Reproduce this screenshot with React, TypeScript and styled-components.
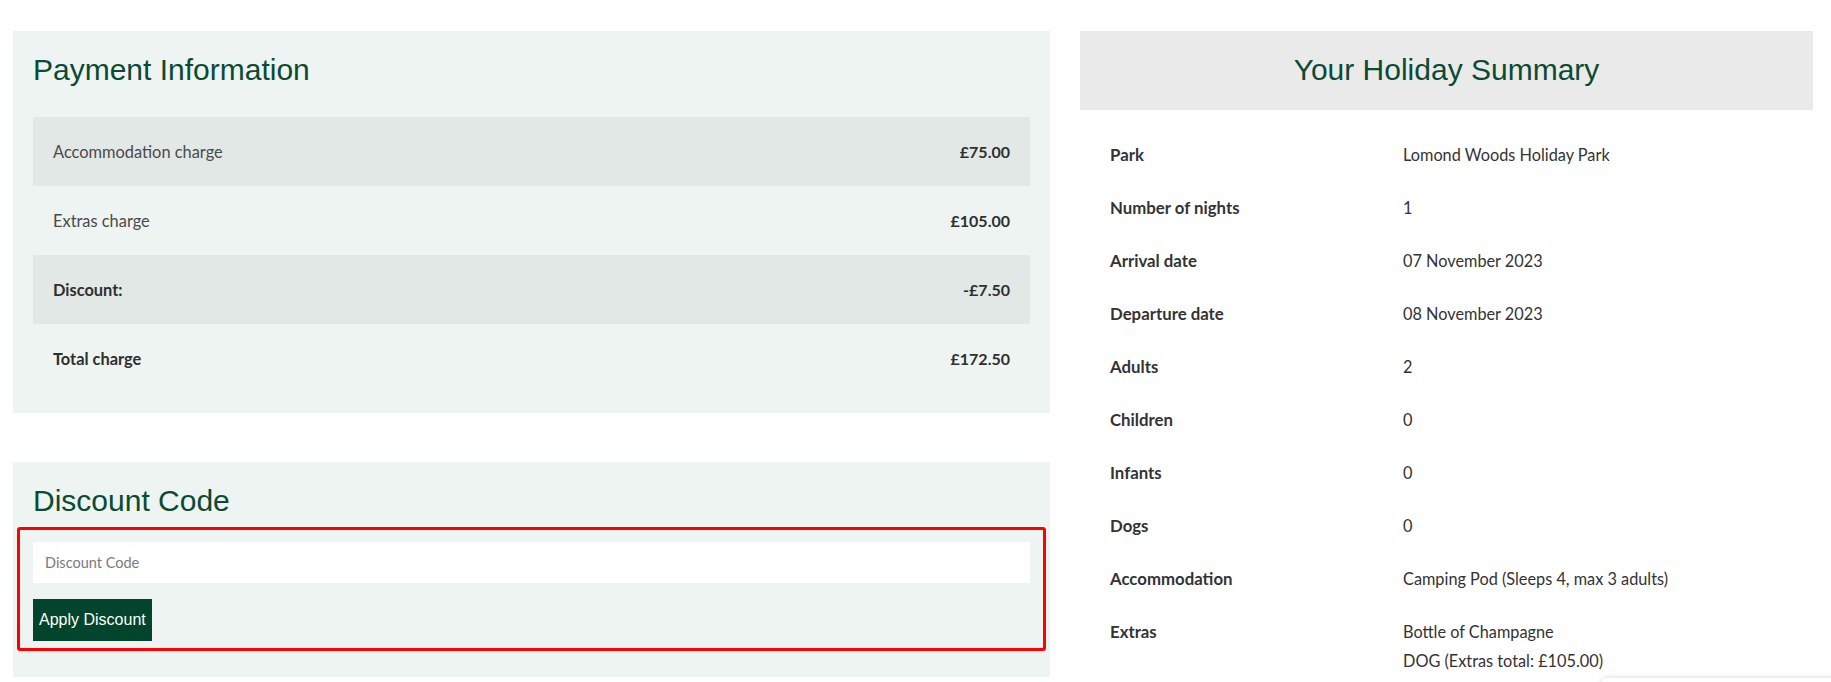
import React from "react";
import styled, { createGlobalStyle } from "styled-components";

const GlobalStyle = createGlobalStyle`
  html, body {
    margin: 0;
    padding: 0;
    background: #ffffff;
  }
  body {
    font-family: Lato, "Open Sans", sans-serif;
    color: #333333;
  }
  * {
    box-sizing: border-box;
  }
`;

// two columns: payment on the left, holiday summary on the right
const Page = styled.div`
  display: grid;
  grid-template-columns: 1037px 733px;
  column-gap: 30px;
  align-items: start;
  padding: 31px 18px 0 13px;
`;

const LeftColumn = styled.div`
  display: flex;
  flex-direction: column;
  gap: 49px;
`;

const Panel = styled.section<{ $bottom?: number }>`
  background-color: #eef4f2;
  padding: 20px 20px ${(p) => p.$bottom ?? 20}px;
`;

const PanelTitle = styled.h2<{ $gap?: number }>`
  margin: 0 0 ${(p) => p.$gap ?? 0}px;
  padding-top: 1px;
  height: 36px;
  font-family: "Liberation Sans", Arial, sans-serif;
  font-size: 30px;
  font-weight: 400;
  line-height: 36px;
  color: #0b4a33;
`;

const ChargeRow = styled.div<{ $shaded?: boolean }>`
  display: flex;
  justify-content: space-between;
  align-items: center;
  padding: 20px;
  line-height: 29px;
  font-size: 16.4px;
  background-color: ${(p) => (p.$shaded ? "#e2e8e6" : "transparent")};
`;

const ChargeLabel = styled.span<{ $strong?: boolean }>`
  font-weight: ${(p) => (p.$strong ? 700 : 400)};
  color: ${(p) => (p.$strong ? "#2f2f2f" : "#4a4a4a")};
`;

const Amount = styled.span`
  font-size: 16px;
  font-weight: 700;
  color: #2f2f2f;
`;

// the outlined group round the code field and its button
const DiscountForm = styled.form`
  margin: 0 -16px;
  padding: 12px 13px 7px;
  border: 3px solid #ff0000;
  border-radius: 3px;
`;

const CodeInput = styled.input`
  display: block;
  width: 100%;
  height: 41px;
  padding: 0 12px;
  border: none;
  outline: none;
  background: #ffffff;
  font-family: Lato, sans-serif;
  font-size: 14.5px;
  color: #333;

  &::placeholder {
    color: #7a7a7a;
  }
`;

const ApplyButton = styled.button`
  display: block;
  margin-top: 16px;
  height: 42px;
  padding: 0 6px;
  border: none;
  border-radius: 0;
  background-color: #02452c;
  color: #ffffff;
  font-family: "Liberation Sans", Arial, sans-serif;
  font-size: 16px;
  cursor: pointer;
`;

const SummaryHeader = styled.div`
  background-color: #eaeaea;
  padding: 20px 0 23px;
  text-align: center;
`;

const SummaryList = styled.dl`
  margin: 0;
  padding: 18px 30px 0;
`;

const SummaryRow = styled.div`
  display: grid;
  grid-template-columns: 293px 1fr;
  padding: 12px 0;
  line-height: 29px;
  font-size: 16.3px;
`;

const Term = styled.dt`
  font-size: 16.8px;
  font-weight: 700;
  color: #333333;
`;

const Detail = styled.dd`
  margin: 0;
  color: #333333;
`;

// edge of a popup peeking in at the bottom of the window
const PeekingPopup = styled.div`
  position: fixed;
  left: 1602px;
  top: 678px;
  width: 260px;
  height: 60px;
  background: #ffffff;
  border-radius: 4px;
  box-shadow: 0 0 5px rgba(0, 0, 0, 0.18);
`;

const charges = [
  { label: "Accommodation charge", amount: "£75.00", strong: false },
  { label: "Extras charge", amount: "£105.00", strong: false },
  { label: "Discount:", amount: "-£7.50", strong: true },
  { label: "Total charge", amount: "£172.50", strong: true },
];

const summary: { term: string; detail: string[] }[] = [
  { term: "Park", detail: ["Lomond Woods Holiday Park"] },
  { term: "Number of nights", detail: ["1"] },
  { term: "Arrival date", detail: ["07 November 2023"] },
  { term: "Departure date", detail: ["08 November 2023"] },
  { term: "Adults", detail: ["2"] },
  { term: "Children", detail: ["0"] },
  { term: "Infants", detail: ["0"] },
  { term: "Dogs", detail: ["0"] },
  { term: "Accommodation", detail: ["Camping Pod (Sleeps 4, max 3 adults)"] },
  { term: "Extras", detail: ["Bottle of Champagne", "DOG (Extras total: £105.00)"] },
];

const App: React.FC = () => {
  return (
    <>
      <GlobalStyle />
      <Page>
        <LeftColumn>
          <Panel>
            <PanelTitle $gap={30}>Payment Information</PanelTitle>
            {charges.map((c, i) => (
              <ChargeRow key={c.label} $shaded={i % 2 === 0}>
                <ChargeLabel $strong={c.strong}>{c.label}</ChargeLabel>
                <Amount>{c.amount}</Amount>
              </ChargeRow>
            ))}
          </Panel>

          <Panel $bottom={26}>
            <PanelTitle $gap={9}>Discount Code</PanelTitle>
            <DiscountForm onSubmit={(e) => e.preventDefault()}>
              <CodeInput type="text" placeholder="Discount Code" />
              <ApplyButton type="submit">Apply Discount</ApplyButton>
            </DiscountForm>
          </Panel>
        </LeftColumn>

        <div>
          <SummaryHeader>
            <PanelTitle>Your Holiday Summary</PanelTitle>
          </SummaryHeader>
          <SummaryList>
            {summary.map((s) => (
              <SummaryRow key={s.term}>
                <Term>{s.term}</Term>
                <Detail>
                  {s.detail.map((line) => (
                    <div key={line}>{line}</div>
                  ))}
                </Detail>
              </SummaryRow>
            ))}
          </SummaryList>
        </div>
      </Page>
      <PeekingPopup />
    </>
  );
};

export default App;
